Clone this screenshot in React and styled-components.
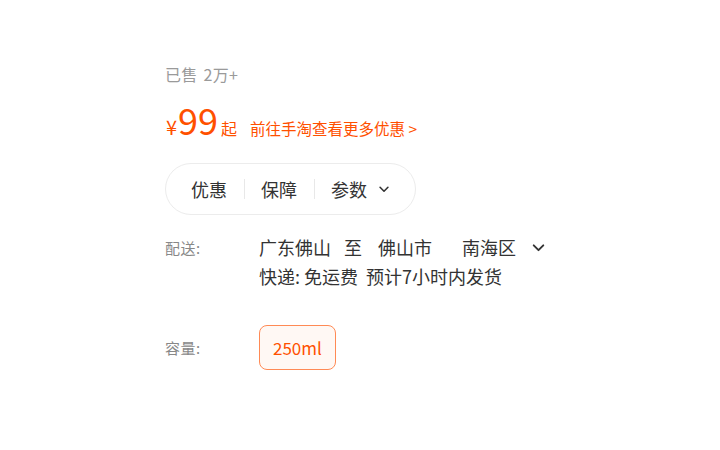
import { Fragment } from 'react';
import styled, { createGlobalStyle } from 'styled-components';

const GlobalStyle = createGlobalStyle`
	body {
		margin: 0;
		background: #fff;
		font-family: "Noto Sans CJK SC", "Noto Sans", sans-serif;
	}
`;

const Page = styled.div`
	width: 720px;
	height: 450px;
	box-sizing: border-box;
	padding: 62px 0 0 165px;
	display: flex;
	flex-direction: column;
`;

const Sold = styled.div`
	font-size: 16px;
	line-height: 24px;
	color: #9a9a9a;
	word-spacing: 2px;
	letter-spacing: 0.3px;
`;

const PriceRow = styled.div`
	margin-top: 10px;
	display: flex;
	align-items: baseline;
	color: #ff5000;
	height: 46px;
`;

const Yen = styled.span`
	font-size: 20px;
	margin-left: 1px;
	margin-right: 1px;
`;

const Big = styled.span`
	font-size: 36px;
	line-height: 46px;
`;

const From = styled.span`
	font-size: 16px;
	margin-left: 3px;
`;

const Promo = styled.a`
	font-size: 15.5px;
	margin-left: 13px;
	color: #ff5000;
	text-decoration: none;
	cursor: pointer;
`;

const Pill = styled.div`
	margin-top: 21px;
	width: 251px;
	height: 52px;
	box-sizing: border-box;
	border: 1px solid #ececec;
	border-radius: 26px;
	display: flex;
	align-items: center;
	padding-left: 25px;
`;

const Tab = styled.div`
	display: flex;
	align-items: center;
	gap: 10px;
	font-size: 18px;
	color: #333;
	cursor: pointer;
`;

const Sep = styled.span`
	width: 1px;
	height: 20px;
	background: #e8e8e8;
	margin: 0 16px 0 17px;
`;

const Row = styled.div`
	display: flex;
	margin-top: ${(p) => p.$top}px;
`;

const Label = styled.div`
	width: 94px;
	flex-shrink: 0;
	font-size: 15px;
	line-height: 29px;
	color: #888;
	letter-spacing: 0.5px;
`;

const Lines = styled.div`
	display: flex;
	flex-direction: column;
	font-size: 18px;
	color: #333;
`;

const Line = styled.div`
	display: flex;
	align-items: center;
	line-height: 29px;
	height: 29px;
	white-space: pre;
`;

const Place = styled.span`
	margin-right: ${(p) => p.$gap}px;
`;

const Chevron = ({ size = 14, color = '#333' }) => (
	<svg width={size} height={size} viewBox="0 0 16 16" fill="none">
		<path d="M3.5 6l4.5 4.5L12.5 6" stroke={color} strokeWidth="1.8" strokeLinecap="round" strokeLinejoin="round" />
	</svg>
);

const Option = styled.button`
	height: 45px;
	padding: 0 13px;
	border: 1px solid #ff8a55;
	border-radius: 8px;
	background: #fff8f4;
	color: #ff5000;
	font-family: inherit;
	font-size: 17px;
	cursor: pointer;
`;

const SizeLabel = styled(Label)`
	line-height: 45px;
`;

const TABS = [
	{ id: 'promo', text: '优惠' },
	{ id: 'guarantee', text: '保障' },
	{ id: 'params', text: '参数', arrow: true },
];

export default function App() {
	return (
		<>
			<GlobalStyle />
			<Page>
				<Sold>已售 2万+</Sold>
				<PriceRow>
					<Yen>¥</Yen>
					<Big>99</Big>
					<From>起</From>
					<Promo>前往手淘查看更多优惠 &gt;</Promo>
				</PriceRow>
				<Pill>
					{TABS.map((t, i) => (
						<Fragment key={t.id}>
							{i > 0 && <Sep />}
							<Tab>
								{t.text}
								{t.arrow && <Chevron size={14} />}
							</Tab>
						</Fragment>
					))}
				</Pill>
				<Row $top={18}>
					<Label>配送:</Label>
					<Lines>
						<Line>
							<Place $gap={13}>广东佛山</Place>
							<Place $gap={16}>至</Place>
							<Place $gap={30}>佛山市</Place>
							<Place $gap={14}>南海区</Place>
							<Chevron size={17} />
						</Line>
						<Line>快递: 免运费  预计7小时内发货</Line>
					</Lines>
				</Row>
				<Row $top={34}>
					<SizeLabel>容量:</SizeLabel>
					<Option>250ml</Option>
				</Row>
			</Page>
		</>
	);
}
